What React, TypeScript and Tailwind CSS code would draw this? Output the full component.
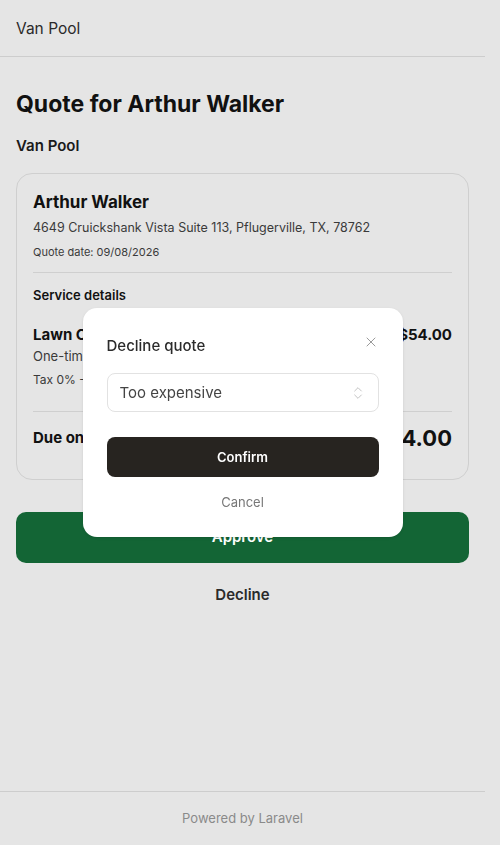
import { X, ChevronsUpDown } from "lucide-react";

const font = { fontFamily: "Inter, 'Noto Sans', sans-serif" };

function QuoteCard() {
  return (
    <div className="mt-[15px] rounded-2xl border border-[#cfcfcf] px-4 pt-4 pb-6">
      <h2 className="text-[17px] font-bold leading-6 text-[#111]">Arthur Walker</h2>
      <p className="mt-1 text-[12.5px] leading-5 text-[#3a3a3a]">
        4649 Cruickshank Vista Suite 113, Pflugerville, TX, 78762
      </p>
      <p className="mt-1.5 text-[11px] leading-4 text-[#3a3a3a]">Quote date: 09/08/2026</p>
      <div className="mt-3 border-t border-[#cfcfcf]" />
      <h3 className="mt-3 text-[13px] font-semibold leading-5 text-[#111]">Service details</h3>
      <div className="mt-5 flex items-start justify-between">
        <div>
          <p className="text-[15px] font-bold leading-5 text-[#111]">Lawn Care</p>
          <p className="mt-[1px] text-[13px] leading-5 text-[#3a3a3a]">One-time service</p>
          <p className="mt-1.5 text-[12px] leading-4 text-[#3a3a3a]">Tax 0% - $0.00</p>
        </div>
        <p className="text-[15px] font-bold leading-5 text-[#111]">$54.00</p>
      </div>
      <div className="mt-[23px] border-t border-[#cfcfcf]" />
      <div className="mt-[10px] flex items-center justify-between">
        <p className="text-[15px] font-bold text-[#111]">Due on approval</p>
        <p className="text-[22px] font-bold text-[#111]">$54.00</p>
      </div>
    </div>
  );
}

function DeclineModal() {
  return (
    <div className="fixed inset-y-0 left-0 right-[15px] flex items-center justify-center">
      <div className="w-[320px] rounded-[14px] bg-white px-6 pt-[27px] pb-[24px] shadow-sm">
        <div className="flex items-center justify-between">
          <h2 className="text-[15px] font-medium text-[#2b2b2b]">Decline quote</h2>
          <X className="h-4 w-4 -translate-y-1 text-[#9a9a9a]" strokeWidth={1.5} />
        </div>
        <div className="mt-4 flex h-[39px] items-center justify-between rounded-lg border border-[#e2e2e2] px-3">
          <span className="text-[15px] text-[#444]">Too expensive</span>
          <ChevronsUpDown className="h-4 w-4 text-[#c4c4c4]" strokeWidth={1.5} />
        </div>
        <button className="mt-[25px] flex h-10 w-full items-center justify-center rounded-lg bg-[#272420] text-[13px] font-semibold text-white">
          Confirm
        </button>
        <button className="mt-4 w-full text-center text-[13px] text-[#777]">Cancel</button>
      </div>
    </div>
  );
}

export default function App() {
  return (
    <div className="min-h-[845px] bg-[#e5e5e5] pr-[15px]" style={font}>
      <div className="flex min-h-[845px] flex-col">
        <header className="border-b border-[#cdcdcd] px-4 pt-[17px] pb-[15px] text-[15.5px] leading-6 text-[#2a2a2a]">
          Van Pool
        </header>
        <main className="flex-1 px-4 pt-[33px]">
          <h1 className="text-[23px] font-bold leading-7 text-[#111]">Quote for Arthur Walker</h1>
          <p className="mt-[17px] text-[15px] font-semibold text-[#1a1a1a]">Van Pool</p>
          <QuoteCard />
          <button className="mt-8 flex h-[51px] w-full items-center justify-center rounded-[10px] bg-[#136535] text-[15px] font-semibold text-white">
            Approve
          </button>
          <button className="mt-[21px] w-full text-center text-[15px] font-semibold text-[#2a2a2a]">
            Decline
          </button>
        </main>
        <footer className="border-t border-[#cdcdcd] py-[17px] text-center text-[13px] text-[#8a8a8a]">
          Powered by Laravel
        </footer>
      </div>
      <DeclineModal />
    </div>
  );
}
